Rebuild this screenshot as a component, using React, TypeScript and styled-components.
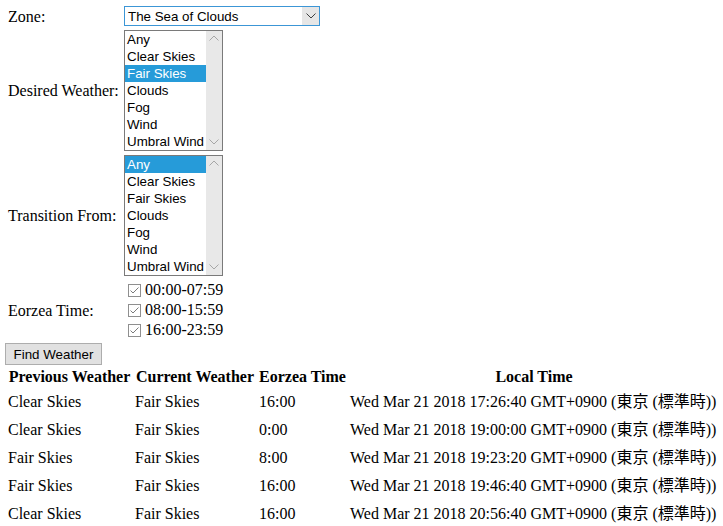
import styled, { createGlobalStyle } from 'styled-components';

const weathers = ['Any', 'Clear Skies', 'Fair Skies', 'Clouds', 'Fog', 'Wind', 'Umbral Wind'];
const times = ['00:00-07:59', '08:00-15:59', '16:00-23:59'];

const results = [
    { prev: 'Clear Skies', cur: 'Fair Skies', et: '16:00', local: 'Wed Mar 21 2018 17:26:40 GMT+0900 (東京 (標準時))' },
    { prev: 'Clear Skies', cur: 'Fair Skies', et: '0:00', local: 'Wed Mar 21 2018 19:00:00 GMT+0900 (東京 (標準時))' },
    { prev: 'Fair Skies', cur: 'Fair Skies', et: '8:00', local: 'Wed Mar 21 2018 19:23:20 GMT+0900 (東京 (標準時))' },
    { prev: 'Fair Skies', cur: 'Fair Skies', et: '16:00', local: 'Wed Mar 21 2018 19:46:40 GMT+0900 (東京 (標準時))' },
    { prev: 'Clear Skies', cur: 'Fair Skies', et: '16:00', local: 'Wed Mar 21 2018 20:56:40 GMT+0900 (東京 (標準時))' }
];

const GlobalStyle = createGlobalStyle`
    body {
        margin: 0;
        background: #fff;
        color: #000;
        font-family: "Liberation Serif", "Noto Sans CJK JP", serif;
        font-size: 16px;
    }
`;

const StyledPage = styled.div`
    padding: 6px 5px 0 5px;
`;

const StyledForm = styled.div`
    display: grid;
    grid-template-columns: 116px auto;
    grid-template-rows: 20px 121px 121px 60px;
    row-gap: 4px;
    margin-left: 3px;
    align-items: center;
    justify-items: start;
`;

const StyledLabel = styled.div`
    line-height: 18px;
    padding-top: 1px;
`;

const StyledCombo = styled.div`
    display: flex;
    width: 196px;
    height: 20px;
    box-sizing: border-box;
    border: 1px solid #3c96d6;
    font-family: "Liberation Sans", sans-serif;
    font-size: 13.33px;
`;

const StyledComboText = styled.div`
    flex: 1;
    padding: 1px 0 0 3px;
    line-height: 17px;
`;

const StyledArrowBox = styled.div`
    width: 17px;
    display: flex;
    align-items: center;
    justify-content: center;
    background: #e6e6e6;
`;

const StyledListBox = styled.div`
    display: flex;
    width: 99px;
    height: 121px;
    box-sizing: border-box;
    border: 1px solid #7a7a7a;
    font-family: "Liberation Sans", sans-serif;
    font-size: 13.33px;
`;

const StyledOptions = styled.div`
    flex: 1;
    overflow: hidden;
`;

const StyledOption = styled.div<{ $selected: boolean }>`
    height: 17px;
    line-height: 17px;
    padding-left: 2px;
    white-space: nowrap;
    background: ${({ $selected }) => ($selected ? '#269bd9' : 'transparent')};
    color: ${({ $selected }) => ($selected ? '#fff' : '#000')};
`;

const StyledScrollbar = styled.div`
    width: 16px;
    background: #e8e8e8;
    display: flex;
    flex-direction: column;
    justify-content: space-between;
    align-items: center;
    padding: 4px 0 5px;
`;

const StyledChecks = styled.div`
    display: flex;
    flex-direction: column;
    padding-left: 4px;
`;

const StyledCheckRow = styled.div`
    display: flex;
    align-items: center;
    height: 20px;
    gap: 4px;
    line-height: 18px;
`;

const StyledCheckbox = styled.span`
    width: 13px;
    height: 13px;
    box-sizing: border-box;
    border: 1px solid #8f8f8f;
    background: #fff;
    display: flex;
    align-items: center;
    justify-content: center;
`;

const StyledButton = styled.button`
    display: block;
    margin-top: 3px;
    height: 22px;
    width: 97px;
    padding: 0;
    background: #e1e1e1;
    border: 1px solid #adadad;
    font-family: "Liberation Sans", sans-serif;
    font-size: 13.33px;
    color: #000;
`;

const StyledTable = styled.table`
    width: 716px;
    border-spacing: 2px;
    table-layout: fixed;
    white-space: nowrap;
`;

const StyledTh = styled.th`
    padding: 1px;
    line-height: 18px;
    font-weight: bold;
    overflow: visible;
`;

const StyledTd = styled.td`
    padding: 4px 1px;
    line-height: 18px;
    text-align: left;
    overflow: visible;
`;

const Chevron = ({ up, color }: { up?: boolean; color: string }) => (
    <svg width="10" height="6" viewBox="0 0 10 6">
        <polyline
            points={up ? '0.5,5.5 5,1 9.5,5.5' : '0.5,0.5 5,5 9.5,0.5'}
            fill="none"
            stroke={color}
            strokeWidth="1"
        />
    </svg>
);

const ListBox = ({ selected }: { selected: string }) => (
    <StyledListBox>
        <StyledOptions>
            {weathers.map((w) => (
                <StyledOption key={w} $selected={w === selected}>
                    {w}
                </StyledOption>
            ))}
        </StyledOptions>
        <StyledScrollbar>
            <Chevron up color="#a6a6a6" />
            <Chevron color="#a6a6a6" />
        </StyledScrollbar>
    </StyledListBox>
);

const CheckMark = () => (
    <svg width="9" height="7" viewBox="0 0 9 7">
        <polyline points="0.5,3.5 3,6 8.5,0.5" fill="none" stroke="#7a7a7a" strokeWidth="1" />
    </svg>
);

export default function App() {
    return (
        <StyledPage>
            <GlobalStyle />
            <StyledForm>
                <StyledLabel>Zone:</StyledLabel>
                <StyledCombo>
                    <StyledComboText>The Sea of Clouds</StyledComboText>
                    <StyledArrowBox>
                        <Chevron color="#3f3f3f" />
                    </StyledArrowBox>
                </StyledCombo>
                <StyledLabel>Desired Weather:</StyledLabel>
                <ListBox selected="Fair Skies" />
                <StyledLabel>Transition From:</StyledLabel>
                <ListBox selected="Any" />
                <StyledLabel>Eorzea Time:</StyledLabel>
                <StyledChecks>
                    {times.map((t) => (
                        <StyledCheckRow key={t}>
                            <StyledCheckbox>
                                <CheckMark />
                            </StyledCheckbox>
                            {t}
                        </StyledCheckRow>
                    ))}
                </StyledChecks>
            </StyledForm>
            <StyledButton>Find Weather</StyledButton>
            <StyledTable>
                <colgroup>
                    <col style={{ width: 125 }} />
                    <col style={{ width: 122 }} />
                    <col style={{ width: 89 }} />
                    <col />
                </colgroup>
                <thead>
                    <tr>
                        <StyledTh>Previous Weather</StyledTh>
                        <StyledTh>Current Weather</StyledTh>
                        <StyledTh>Eorzea Time</StyledTh>
                        <StyledTh>Local Time</StyledTh>
                    </tr>
                </thead>
                <tbody>
                    {results.map((r) => (
                        <tr key={r.local}>
                            <StyledTd>{r.prev}</StyledTd>
                            <StyledTd>{r.cur}</StyledTd>
                            <StyledTd>{r.et}</StyledTd>
                            <StyledTd>{r.local}</StyledTd>
                        </tr>
                    ))}
                </tbody>
            </StyledTable>
        </StyledPage>
    );
}
